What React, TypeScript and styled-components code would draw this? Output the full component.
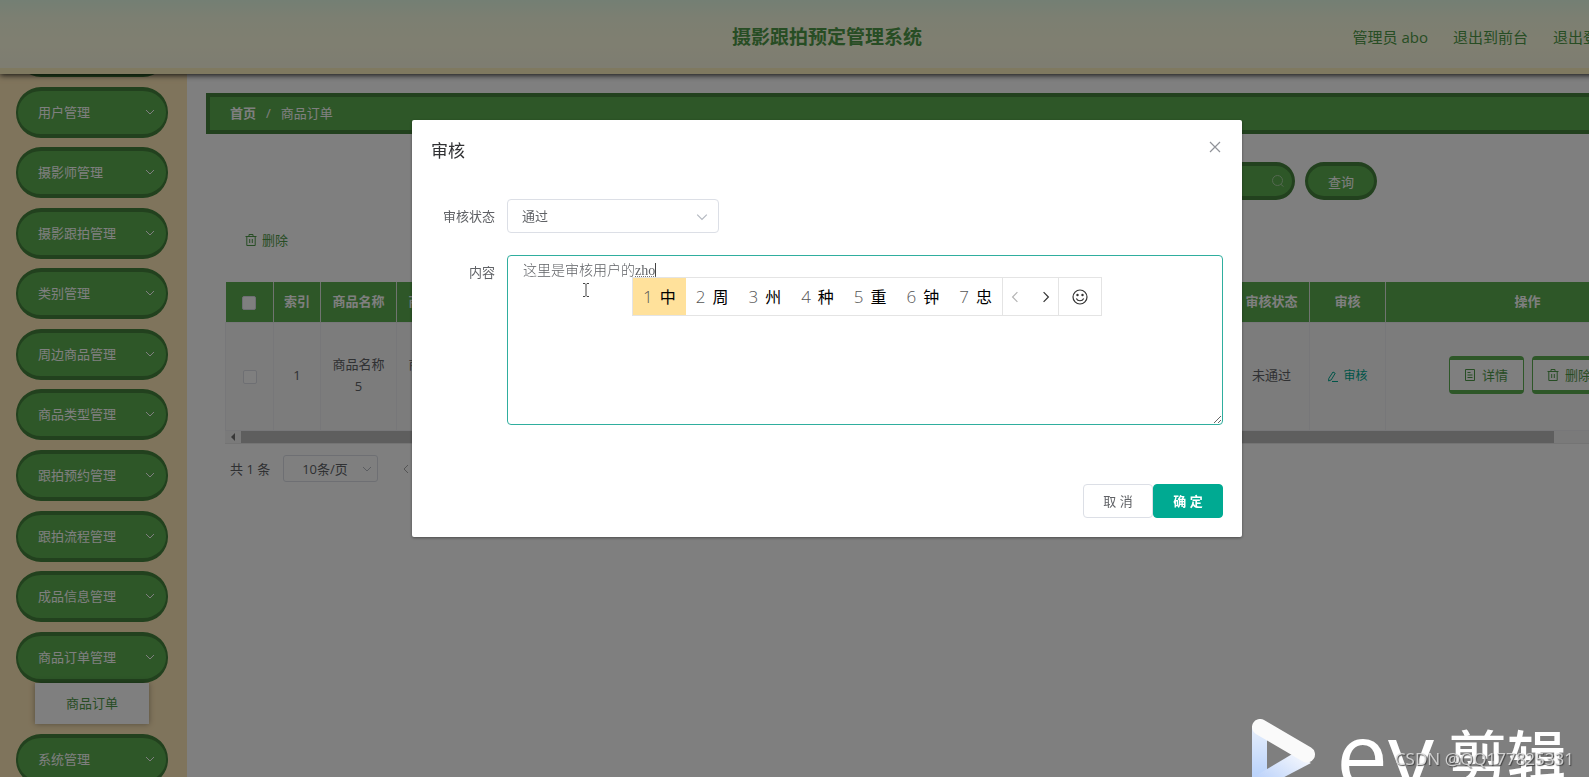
import React from "react";
import styled, { createGlobalStyle } from "styled-components";

const GREEN = "#5cae50";
const DARK_GREEN = "#44833c";
const TEXT_GREEN = "#4f9a48";
const TEAL = "#00aa92";
const SANS = `"Open Sans", "Noto Sans CJK SC", sans-serif`;

const GlobalStyle = createGlobalStyle`
  *, *::before, *::after { box-sizing: border-box; }
  body {
    margin: 0;
    overflow: hidden;
    background: #fff;
    font-family: ${SANS};
    font-size: 13px;
    line-height: 20px;
    color: #606266;
  }
  button, input, select, textarea { font: inherit; color: inherit; margin: 0; }
  button { cursor: pointer; }
  a { color: inherit; text-decoration: none; }
  ul { list-style: none; margin: 0; padding: 0; }
`;

/* The console is wider than the window, its right edge is cut off. */
const Page = styled.div`
  display: flex;
  flex-direction: column;
  height: 100vh;
  margin-right: -70px;
  overflow: hidden;
`;

const Header = styled.header`
  position: relative;
  z-index: 1;
  display: grid;
  grid-template-columns: 1fr auto 1fr;
  align-items: center;
  flex: none;
  height: 74px;
  padding: 0 46px 0 41px;
  border-bottom: 6px solid #fff3c0;
  background: linear-gradient(#e8ffe8 0%, #f8ffe4 26%, #ffffe2 60%, #fcfae2 100%);
  box-shadow: 0 1px 6px rgba(0, 0, 0, 0.9);
  color: ${TEXT_GREEN};
`;

const Title = styled.h1`
  grid-column: 2;
  margin: 6px 0 0;
  font-size: 19px;
  line-height: 27px;
  font-weight: 700;
`;

const HeaderLinks = styled.nav`
  display: flex;
  justify-content: flex-end;
  gap: 25px;
  margin-top: 6px;
  font-size: 15px;
  line-height: 23px;
  white-space: nowrap;
`;

const Body = styled.div`
  display: flex;
  flex: 1;
  min-height: 0;
`;

const Sidebar = styled.aside`
  display: flex;
  flex-direction: column;
  flex: none;
  width: 187px;
  padding: 0 19px 0 16px;
  background: #ffe8b8;
`;

const Menu = styled.ul`
  display: flex;
  flex: 1;
  flex-direction: column;
  justify-content: space-between;
  margin: -48px 0 -8px;
`;

const MenuButton = styled.button`
  display: flex;
  align-items: center;
  justify-content: space-between;
  width: 100%;
  height: 51px;
  padding: 0 11px 1px 20px;
  border: solid ${DARK_GREEN};
  border-width: 4px 2px;
  border-radius: 25px;
  background: ${GREEN};
  color: #fff;
`;

/* Closes the gap between the sub-menu and the entry that opened it. */
const SubMenu = styled.li`
  margin: -9px 19px 0;
`;

const SubLink = styled.a`
  display: block;
  height: 41px;
  background: #fff;
  color: ${TEXT_GREEN};
  line-height: 41px;
  text-align: center;
  box-shadow: 0 0 6px rgba(0, 0, 0, 0.35);
`;

const Content = styled.main`
  flex: 1;
  min-width: 0;
  padding: 19px 0 0 19px;
`;

const Breadcrumb = styled.nav`
  display: flex;
  align-items: center;
  gap: 10px;
  height: 41px;
  padding: 0 20px 1px;
  border: 4px solid ${DARK_GREEN};
  background: ${GREEN};
  color: #fff;
`;

const SearchForm = styled.form`
  display: flex;
  justify-content: flex-end;
  gap: 10px;
  margin: 28px 282px 0 260px;
`;

const SearchBox = styled.div`
  display: flex;
  flex: 1;
  align-items: center;
  height: 38px;
  padding: 0 8px 0 20px;
  border: solid ${DARK_GREEN};
  border-width: 4px 3px;
  border-radius: 20px;
  background: ${GREEN};
  color: #a9d0a3;
`;

const SearchInput = styled.input`
  flex: 1;
  min-width: 0;
  border: 0;
  outline: 0;
  background: transparent;
`;

const SearchButton = styled.button`
  width: 72px;
  height: 38px;
  padding: 2px 0 0;
  border: solid ${DARK_GREEN};
  border-width: 4px 3px;
  border-radius: 20px;
  background: ${GREEN};
  color: #fff;
`;

const Toolbar = styled.div`
  margin: 28px 0 0 39px;
`;

const TextButton = styled.button`
  display: inline-flex;
  align-items: center;
  gap: 5px;
  height: 20px;
  padding: 0;
  border: 0;
  background: none;
  color: ${(p: { $teal?: boolean }) => (p.$teal ? TEAL : TEXT_GREEN)};
  font-size: ${(p: { $teal?: boolean }) => (p.$teal ? "12px" : "13px")};
  vertical-align: middle;
`;

const TableFrame = styled.div`
  margin: 32px 0 0 19px;
  overflow: hidden;
  border-bottom: 1px solid #e8e8e8;
`;

const Table = styled.table`
  width: 100%;
  min-width: 1445px;
  table-layout: fixed;
  border-collapse: collapse;
  text-align: center;
`;

const Th = styled.th`
  height: 41px;
  padding: 0 0 1px;
  border-right: 1px solid #e0e8e0;
  background: ${GREEN};
  color: #fff;
  font-weight: 700;
`;

const Td = styled.td`
  height: 108px;
  padding: 0 8px 3px;
  border: 1px solid #eeeef2;
  background: #f8f8f8;
  line-height: 22px;
  white-space: nowrap;
`;

const Check = styled.input`
  appearance: none;
  display: inline-block;
  width: 14px;
  height: 14px;
  border: 1px solid #dcdfe6;
  border-radius: 2px;
  background: #fff;
  vertical-align: middle;
`;

const Actions = styled.div`
  display: flex;
  justify-content: center;
  gap: 8px;
`;

const ActionButton = styled.button`
  display: flex;
  align-items: center;
  justify-content: center;
  gap: 6px;
  width: 75px;
  height: 38px;
  padding: 0;
  border: solid ${GREEN};
  border-width: 4px 1px;
  border-radius: 4px;
  background: #fff;
  color: ${TEXT_GREEN};
`;

const ScrollTrack = styled.div`
  display: flex;
  align-items: center;
  height: 12px;
  padding-left: 5px;
  background: #f4f4f4;
  color: #707070;
`;

const ScrollThumb = styled.div`
  width: 1313px;
  height: 12px;
  margin-left: 5px;
  background: #bcbcbc;
`;

const Pagination = styled.div`
  display: flex;
  align-items: center;
  gap: 13px;
  margin: 11px 0 0 24px;
`;

const SelectWrap = styled.div<{ $width: number; $right: number }>`
  position: relative;
  width: ${(p) => p.$width}px;
  svg {
    position: absolute;
    top: 50%;
    right: ${(p) => p.$right}px;
    margin-top: -5px;
    color: #b4b8c0;
    pointer-events: none;
  }
`;

const PageSize = styled.select`
  appearance: none;
  display: block;
  width: 100%;
  height: 27px;
  padding: 0 18px;
  border: 1px solid #dcdfe6;
  border-radius: 3px;
  background: #fff;
`;

const PagerButton = styled.button`
  display: flex;
  margin-left: 10px;
  padding: 0;
  border: 0;
  background: none;
  color: #a8a8a8;
`;

const Backdrop = styled.div`
  position: fixed;
  inset: 0 -65px 0 0;
  z-index: 2;
  display: flex;
  align-items: flex-start;
  justify-content: center;
  padding-top: 120px;
  background: rgba(0, 0, 0, 0.5);
`;

const Dialog = styled.section`
  width: 830px;
  padding: 0 19px 19px;
  border-radius: 2px;
  background: #fff;
  box-shadow: 0 1px 3px rgba(0, 0, 0, 0.4);
`;

const DialogHead = styled.div`
  display: flex;
  align-items: center;
  justify-content: space-between;
  padding-top: 16px;
  color: #303133;
`;

const DialogTitle = styled.h2`
  margin: 2px 0 0;
  font-size: 17px;
  line-height: 26px;
  font-weight: 400;
`;

const CloseButton = styled.button`
  display: flex;
  padding: 0;
  margin: 0 2px 6px 0;
  border: 0;
  background: none;
  color: #909399;
`;

const Field = styled.div<{ $top: number }>`
  display: flex;
  align-items: flex-start;
  margin-top: ${(p) => p.$top}px;
`;

const Label = styled.label`
  flex: none;
  width: 76px;
  padding-right: 12px;
  line-height: 34px;
  text-align: right;
`;

const StatusSelect = styled.select`
  appearance: none;
  display: block;
  width: 100%;
  height: 34px;
  padding: 0 14px;
  border: 1px solid #dcdfe6;
  border-radius: 4px;
  background: #fff;
`;

const AreaWrap = styled.div`
  position: relative;
  flex: 1;
`;

const Area = styled.textarea`
  display: block;
  width: 100%;
  height: 170px;
  padding: 5px 15px;
  border: 1px solid #2fae9e;
  border-radius: 4px;
  outline: 0;
  background: #fff;
  font-family: "Liberation Serif", "Noto Sans CJK SC", serif;
  font-size: 14px;
  font-weight: 300;
  line-height: 20px;
`;

const Pointer = styled.svg`
  position: absolute;
  top: 27px;
  left: 75px;
`;

/* Underline and caret of the syllable that is being typed. */
const Composition = styled.span`
  position: absolute;
  top: 8px;
  left: 128px;
  width: 21px;
  height: 14px;
  border-right: 1px solid #444;
  border-bottom: 1px dotted #777;
`;

const Ime = styled.div`
  position: absolute;
  top: 22px;
  left: 125px;
  display: flex;
  width: 470px;
  height: 39px;
  border: 1px solid #e4e4e4;
  background: #fff;
  color: #000;
`;

const Candidate = styled.button<{ $active?: boolean }>`
  display: flex;
  flex: 1;
  align-items: center;
  justify-content: center;
  gap: 7px;
  padding: 0;
  border: 0;
  background: ${(p) => (p.$active ? "#ffe19b" : "#fff")};
  font-size: 16px;
`;

const Digit = styled.span`
  color: #555;
  font-family: "Open Sans", sans-serif;
  font-size: 17px;
  font-weight: 300;
`;

const ImeGroup = styled.div<{ $width: number }>`
  display: flex;
  align-items: center;
  justify-content: space-between;
  width: ${(p) => p.$width}px;
  padding: 0 6px;
  border-left: 1px solid #e4e4e4;
`;

const ImeButton = styled.button<{ $dim?: boolean }>`
  display: flex;
  margin: 0 auto;
  padding: 0;
  border: 0;
  background: none;
  color: ${(p) => (p.$dim ? "#b4b4b4" : "#333")};

  &:not(:only-child) {
    margin: 0;
  }
`;

const DialogFoot = styled.div`
  display: flex;
  justify-content: flex-end;
  margin-top: 59px;
`;

const DialogButton = styled.button<{ $primary?: boolean }>`
  width: 70px;
  height: 34px;
  padding: 0;
  border: 1px solid ${(p) => (p.$primary ? TEAL : "#dcdfe6")};
  border-radius: 4px;
  background: ${(p) => (p.$primary ? TEAL : "#fff")};
  color: ${(p) => (p.$primary ? "#fff" : "#606266")};
  font-weight: ${(p) => (p.$primary ? 700 : 400)};
`;

const Brand = styled.div`
  position: fixed;
  right: 23px;
  bottom: -17px;
  z-index: 3;
  display: flex;
  align-items: flex-start;
  height: 75px;
  color: #fff;
  white-space: nowrap;
`;

const BrandLatin = styled.span`
  margin-left: 20px;
  font-family: "Open Sans", sans-serif;
  font-size: 92px;
  line-height: 70px;
  font-weight: 500;
`;

const BrandHan = styled.span`
  margin-left: 14px;
  font-family: "Noto Sans CJK SC", sans-serif;
  font-size: 59px;
  line-height: 72px;
  font-weight: 500;
`;

const Credit = styled.div`
  position: fixed;
  right: 15px;
  bottom: 7px;
  z-index: 4;
  color: rgba(225, 225, 225, 0.85);
  font-family: "Noto Sans", sans-serif;
  font-size: 17px;
  line-height: 22px;
  text-shadow: 1px 1px 1px rgba(60, 60, 60, 0.9);
`;

type Dir = "down" | "left" | "right";
const chevrons: Record<Dir, string> = {
  down: "M1 3l4 4 4-4",
  left: "M7 1L3 5l4 4",
  right: "M3 1l4 4-4 4",
};

const Chevron = ({ dir = "down", size = 10 }: { dir?: Dir; size?: number }) => (
  <svg width={size} height={size} viewBox="0 0 10 10" fill="none" stroke="currentColor" strokeWidth="1" aria-hidden>
    <path d={chevrons[dir]} />
  </svg>
);

const Trash = () => (
  <svg width="12" height="12" viewBox="0 0 12 12" fill="none" stroke="currentColor" aria-hidden>
    <path d="M0.5 2.5h11M4 2.5v-2h4v2M1.8 2.5v9h8.4v-9M4.7 5v4M7.3 5v4" />
  </svg>
);

const Doc = () => (
  <svg width="12" height="12" viewBox="0 0 12 12" fill="none" stroke="currentColor" aria-hidden>
    <path d="M1.5 0.5h9v11h-9zM3.5 3.5h3M3.5 6h5M3.5 8.5h5" />
  </svg>
);

const Pen = () => (
  <svg width="11" height="11" viewBox="0 0 11 11" fill="none" stroke="currentColor" aria-hidden>
    <path d="M6 1l2.2 1.3-4 6.6L1.6 10 1.8 7.4zM5 10.5h6" />
  </svg>
);

const menu = [
  "首页管理", "用户管理", "摄影师管理", "摄影跟拍管理", "类别管理", "周边商品管理",
  "商品类型管理", "跟拍预约管理", "跟拍流程管理", "成品信息管理", "商品订单管理",
];
const candidates = ["中", "周", "州", "种", "重", "钟", "忠"];

const MenuItem = ({ label }: { label: string }) => (
  <li>
    <MenuButton type="button">
      {label}
      <Chevron />
    </MenuButton>
  </li>
);

export default function App() {
  return (
    <>
      <GlobalStyle />
      <Page>
        <Header>
          <Title>摄影跟拍预定管理系统</Title>
          <HeaderLinks>
            <span>管理员 abo</span>
            <a href="#front">退出到前台</a>
            <a href="#logout">退出登录</a>
          </HeaderLinks>
        </Header>
        <Body>
          <Sidebar>
            <Menu>
              {menu.map((label) => (
                <MenuItem key={label} label={label} />
              ))}
              <SubMenu>
                <SubLink href="#orders">商品订单</SubLink>
              </SubMenu>
              <MenuItem label="系统管理" />
            </Menu>
          </Sidebar>
          <Content>
            <Breadcrumb>
              <b>首页</b>
              <span>/</span>
              <span>商品订单</span>
            </Breadcrumb>
            <SearchForm>
              <SearchBox>
                <SearchInput aria-label="商品名称" />
                <svg width="12" height="12" viewBox="0 0 12 12" fill="none" stroke="currentColor" aria-hidden>
                  <circle cx="5.5" cy="5.5" r="5" />
                  <path d="M9 9.5l2.5 2" />
                </svg>
              </SearchBox>
              <SearchButton type="button">查询</SearchButton>
            </SearchForm>
            <Toolbar>
              <TextButton type="button">
                <Trash />
                删除
              </TextButton>
            </Toolbar>
            <TableFrame>
              <Table>
                <colgroup>
                  <col width="48" />
                  <col width="47" />
                  <col width="76" />
                  <col width="76" />
                  <col />
                  <col width="76" />
                  <col width="76" />
                  <col width="284" />
                </colgroup>
                <thead>
                  <tr>
                    <Th><Check type="checkbox" aria-label="全选" /></Th>
                    <Th>索引</Th>
                    <Th>商品名称</Th>
                    <Th>商品类型</Th>
                    <Th />
                    <Th>审核状态</Th>
                    <Th>审核</Th>
                    <Th>操作</Th>
                  </tr>
                </thead>
                <tbody>
                  <tr>
                    <Td><Check type="checkbox" aria-label="选择第 1 行" /></Td>
                    <Td>1</Td>
                    <Td>商品名称<br />5</Td>
                    <Td>商品类型<br />5</Td>
                    <Td />
                    <Td>未通过</Td>
                    <Td>
                      <TextButton type="button" $teal>
                        <Pen />
                        审核
                      </TextButton>
                    </Td>
                    <Td>
                      <Actions>
                        <ActionButton type="button"><Doc />详情</ActionButton>
                        <ActionButton type="button"><Trash />删除</ActionButton>
                      </Actions>
                    </Td>
                  </tr>
                </tbody>
              </Table>
              <ScrollTrack>
                <svg width="6" height="8" viewBox="0 0 6 8" fill="currentColor" aria-hidden>
                  <path d="M5 0v8L1 4z" />
                </svg>
                <ScrollThumb />
              </ScrollTrack>
            </TableFrame>
            <Pagination>
              <span>共 1 条</span>
              <SelectWrap $width={95} $right={6}>
                <PageSize aria-label="每页条数" defaultValue="10">
                  <option value="10">10条/页</option>
                </PageSize>
                <Chevron />
              </SelectWrap>
              <PagerButton type="button" aria-label="上一页"><Chevron dir="left" /></PagerButton>
            </Pagination>
          </Content>
        </Body>
      </Page>

      <Backdrop>
        <Dialog role="dialog" aria-labelledby="dialog-title">
          <DialogHead>
            <DialogTitle id="dialog-title">审核</DialogTitle>
            <CloseButton type="button" aria-label="关闭">
              <svg width="12" height="12" viewBox="0 0 12 12" stroke="currentColor" strokeWidth="1.2" aria-hidden>
                <path d="M1 1l10 10M11 1L1 11" />
              </svg>
            </CloseButton>
          </DialogHead>
          <Field $top={35}>
            <Label htmlFor="status">审核状态</Label>
            <SelectWrap $width={212} $right={11}>
              <StatusSelect id="status" defaultValue="pass">
                <option value="pass">通过</option>
              </StatusSelect>
              <Chevron size={12} />
            </SelectWrap>
          </Field>
          <Field $top={22}>
            <Label htmlFor="content">内容</Label>
            <AreaWrap>
              <Area id="content" defaultValue="这里是审核用户的zho" />
              <Composition />
              <Pointer width="8" height="16" viewBox="0 0 8 16" fill="none" stroke="#444" aria-hidden>
                <path d="M1 1.5h2l1 1 1-1h2M4 2.5v11M1 14.5h2l1-1 1 1h2" />
              </Pointer>
              <Ime>
                {candidates.map((c, i) => (
                  <Candidate key={c} type="button" $active={i === 0}>
                    <Digit>{i + 1}</Digit>
                    {c}
                  </Candidate>
                ))}
                <ImeGroup $width={56}>
                  <ImeButton type="button" $dim aria-label="上一组"><Chevron dir="left" size={12} /></ImeButton>
                  <ImeButton type="button" aria-label="下一组"><Chevron dir="right" size={12} /></ImeButton>
                </ImeGroup>
                <ImeGroup $width={43}>
                  <ImeButton type="button" aria-label="表情">
                    <svg width="16" height="16" viewBox="0 0 16 16" fill="none" stroke="currentColor" strokeWidth="1.2" aria-hidden>
                      <circle cx="8" cy="8" r="7" />
                      <path d="M4.3 9.5c1.5 3 5.9 3 7.4 0" />
                      <circle cx="5.5" cy="6" r="0.6" fill="currentColor" />
                      <circle cx="10.5" cy="6" r="0.6" fill="currentColor" />
                    </svg>
                  </ImeButton>
                </ImeGroup>
              </Ime>
            </AreaWrap>
          </Field>
          <DialogFoot>
            <DialogButton type="button">取 消</DialogButton>
            <DialogButton type="button" $primary>确 定</DialogButton>
          </DialogFoot>
        </Dialog>
      </Backdrop>

      <Brand>
        <svg width="64" height="75" viewBox="0 0 64 75" aria-hidden>
          <defs>
            <linearGradient id="bar" x1="0" y1="0" x2="0" y2="1">
              <stop offset="0" stopColor="#e6eefb" />
              <stop offset="0.7" stopColor="#bcd4fb" />
            </linearGradient>
            <linearGradient id="arm" x1="1" y1="0" x2="0" y2="1">
              <stop offset="0.1" stopColor="#f4f7fd" />
              <stop offset="0.8" stopColor="#b8d0fa" />
            </linearGradient>
          </defs>
          <path d="M0 8L15 14V75H0z" fill="url(#bar)" />
          <path d="M0 59L42 34l17 10L0 75z" fill="url(#arm)" />
          <path d="M8 8L55 35.5" stroke="#fafafa" strokeWidth="16" strokeLinecap="round" />
        </svg>
        <BrandLatin>ev</BrandLatin>
        <BrandHan>剪辑</BrandHan>
      </Brand>
      <Credit>CSDN @QQ177825331</Credit>
    </>
  );
}
